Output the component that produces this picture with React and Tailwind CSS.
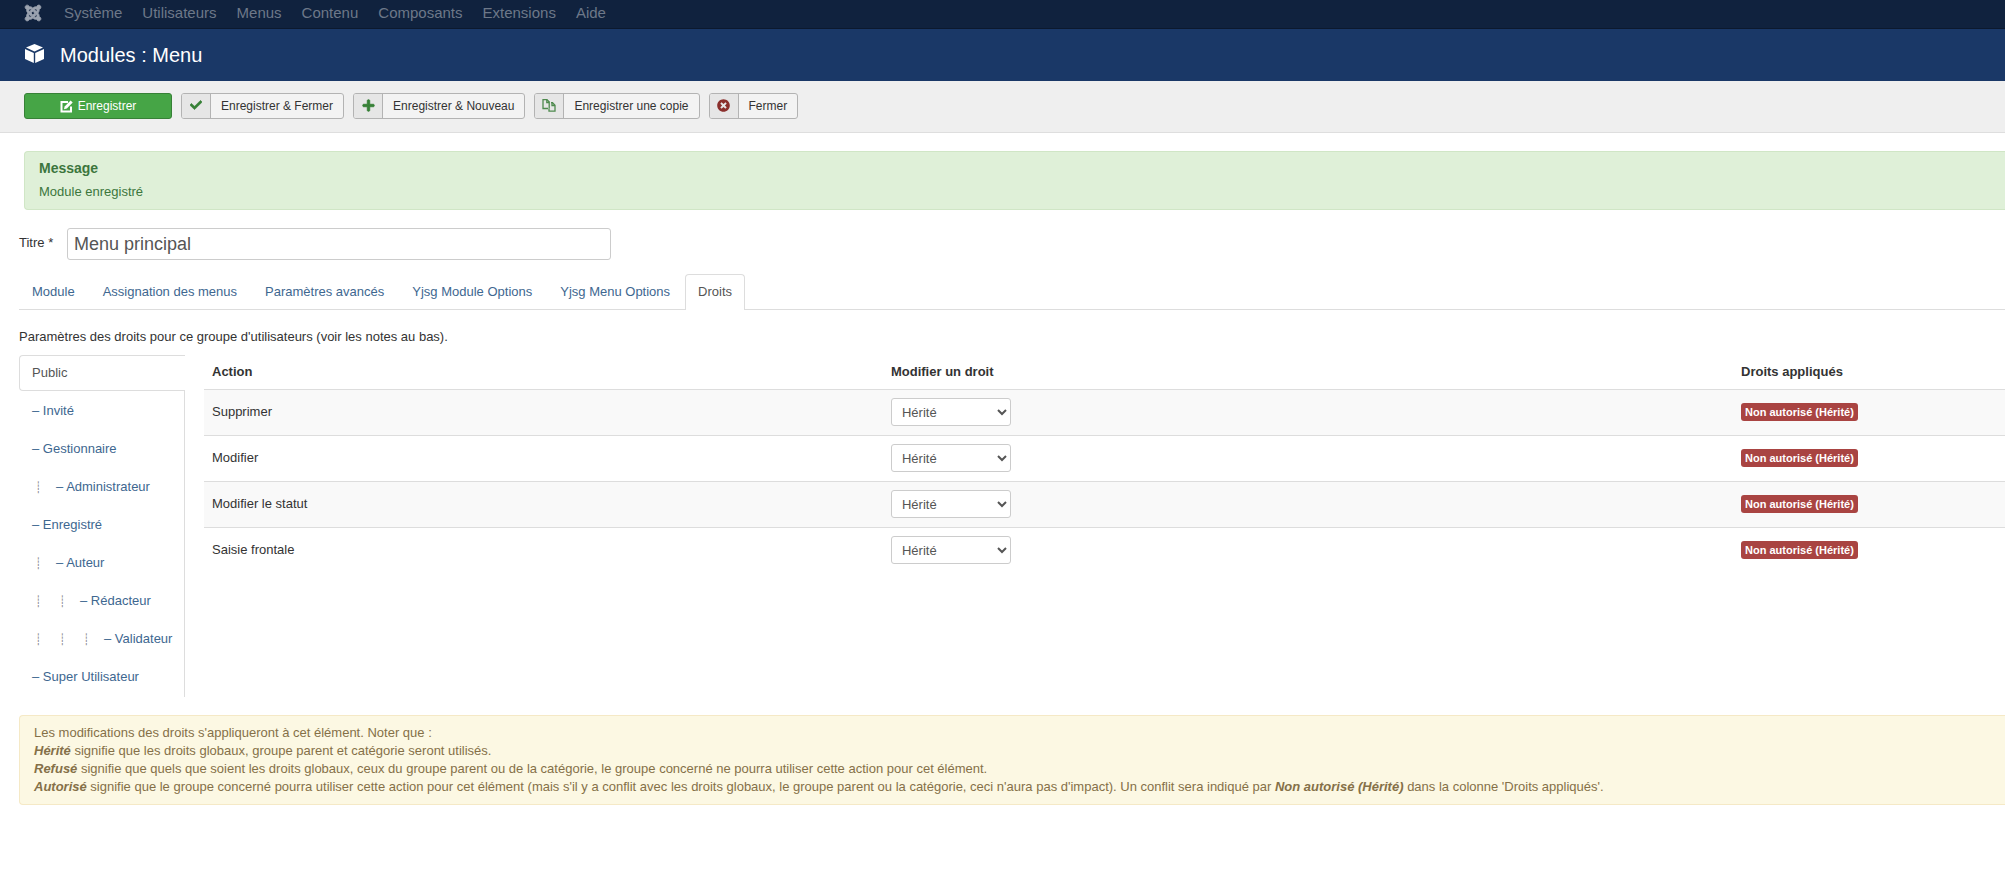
import { useState } from 'react';
import { FaCheck, FaJoomla, FaPlus, FaTimesCircle } from 'react-icons/fa';

const menus = ['Système', 'Utilisateurs', 'Menus', 'Contenu', 'Composants', 'Extensions', 'Aide'];

const tabs = [
  'Module', 'Assignation des menus', 'Paramètres avancés',
  'Yjsg Module Options', 'Yjsg Menu Options', 'Droits',
];

const groups = [
  { name: 'Public', level: 0 },
  { name: 'Invité', level: 1 },
  { name: 'Gestionnaire', level: 1 },
  { name: 'Administrateur', level: 2 },
  { name: 'Enregistré', level: 1 },
  { name: 'Auteur', level: 2 },
  { name: 'Rédacteur', level: 3 },
  { name: 'Validateur', level: 4 },
  { name: 'Super Utilisateur', level: 1 },
];

const actions = ['Supprimer', 'Modifier', 'Modifier le statut', 'Saisie frontale'];

const CubeIcon = () => (
  <svg viewBox="0 0 19 19" className="w-[19px] h-[19px] fill-white" aria-hidden="true">
    <path d="M9.5 0 18 3.6 9.5 7.4 1 3.6Z" />
    <path d="M0 5 8.800 9V19L0 15Z" />
    <path d="M19 5 10.200 9V19L19 15Z" />
  </svg>
);

const EditIcon = () => (
  <svg viewBox="0 0 13 13" className="w-[13px] h-[13px]" fill="none" stroke="white" aria-hidden="true">
    <path d="M8 2H1.500v9.500H11V6.500" strokeWidth="2" />
    <path d="M4 9.300 4.600 6.400 10.600.4l2.100 2.100L6.800 8.600Z" fill="white" stroke="none" />
  </svg>
);

const CopyIcon = () => (
  <svg viewBox="0 0 14 13" className="w-[14px] h-[13px]" fill="none" stroke="#4e8a4e" strokeWidth="1.3" aria-hidden="true">
    <path d="M6 9.500H1V.7H5L7.500 3.200" />
    <path d="M4.800.7v2.800h2.400v6" />
    <path d="M9 3.700H10.500L13 6.200v6H7V9.500" />
    <path d="M10 3.700v2.800h3" />
  </svg>
);

const ToolbarButton = ({ icon, label }) => (
  <button
    type="button"
    className="flex h-[26px] bg-[#f3f3f3] border border-[#b3b3b3] rounded-[3px] text-xs text-[#333] leading-6 overflow-hidden"
  >
    <span className="flex items-center justify-center w-[29px] h-full pb-0.5 bg-[#e6e6e6] border-r border-[#b3b3b3]">{icon}</span>
    <span className="px-2.5">{label}</span>
  </button>
);

const App = () => {
  const [title, setTitle] = useState('Menu principal');
  const [tab, setTab] = useState('Droits');
  const [group, setGroup] = useState('Public');

  return (
    <div className="min-h-screen overflow-hidden bg-white font-['Liberation_Sans',Arial,sans-serif] text-[13px] leading-[18px] text-[#333]">
      <nav className="flex items-center h-[29px] pl-6 pb-0.5 bg-[#10223e] border-b border-[#0c192e] text-[15px] text-[#6d7889]">
        <a href="#" aria-label="Joomla" className="mr-[22px] text-[#9ba3b0]">
          <FaJoomla size={18} stroke="currentColor" strokeWidth={24} />
        </a>
        <div className="flex gap-5">
          {menus.map((m) => <a key={m} href="#">{m}</a>)}
        </div>
      </nav>

      <header className="flex items-center h-[52px] pl-[25px] gap-4 bg-[#1a3867] text-white">
        <div className="pb-1"><CubeIcon /></div>
        <h1 className="text-xl">Modules : Menu</h1>
      </header>

      <div className="flex gap-[9px] h-[52px] pt-3 pl-6 bg-[#efefef] border-b border-[#dedede]">
        <button
          type="button"
          className="flex items-center justify-center gap-[5px] w-[148px] h-[26px] bg-[#46a546] border border-[#378137] rounded-[3px] text-xs text-white"
        >
          <EditIcon />Enregistrer
        </button>
        <ToolbarButton icon={<FaCheck size={12} color="#378137" stroke="#378137" strokeWidth={20} />} label="Enregistrer & Fermer" />
        <ToolbarButton icon={<FaPlus size={13} color="#378137" stroke="#378137" strokeWidth={36} />} label="Enregistrer & Nouveau" />
        <ToolbarButton icon={<CopyIcon />} label="Enregistrer une copie" />
        <ToolbarButton icon={<FaTimesCircle size={13} color="#8a2f2c" />} label="Fermer" />
      </div>

      <div className="mt-[18px] ml-6 h-[59px] pt-[7px] pl-3.5 bg-[#dff0d8] border border-r-0 border-[#d0e6c6] rounded-l text-[#3c763d]">
        <h4 className="text-sm leading-[18px] font-bold">Message</h4>
        <p className="mt-1.5">Module enregistré</p>
      </div>

      <main className="pl-[19px]">
        <div className="flex mt-[18px]">
          <label htmlFor="title" className="w-12 pt-1.5">Titre *</label>
          <input
            id="title"
            type="text"
            value={title}
            onChange={(e) => setTitle(e.target.value)}
            className="w-[544px] h-8 px-1.5 border border-[#ccc] rounded-[3px] text-lg text-[#555]"
          />
        </div>

        <div className="flex gap-0.5 mt-3.5 border-b border-[#ddd]">
          {tabs.map((t) => (
            <button
              key={t}
              type="button"
              onClick={() => setTab(t)}
              className={t === tab
                ? 'h-9 -mb-px px-3 pb-px bg-white border border-b-0 border-[#ddd] rounded-t text-[#555]'
                : 'h-[35px] px-[13px] text-[#3e6790]'}
            >
              {t}
            </button>
          ))}
        </div>

        <p className="mt-[18px]">Paramètres des droits pour ce groupe d'utilisateurs (voir les notes au bas).</p>

        <div className="flex items-start mt-[9px]">
          <ul className="shrink-0 w-[166px]">
            {groups.map((g) => (
              <li key={g.name} className={g.name === group ? '' : 'pt-0.5 last:pb-0.5 border-r border-[#ddd]'}>
                <button
                  type="button"
                  onClick={() => setGroup(g.name)}
                  className={g.name === group
                    ? 'flex items-center w-full h-9 pl-3 bg-white border border-r-0 border-[#ddd] rounded-l text-[#555]'
                    : 'flex items-center w-full h-9 pl-[13px] text-[#3e6790]'}
                >
                  {Array.from({ length: Math.max(g.level - 1, 0) }, (_, i) => (
                    <span key={i} className="w-6 pl-[3px] text-left text-[11px] text-[#888]">┊</span>
                  ))}
                  {g.level > 0 && '– '}{g.name}
                </button>
              </li>
            ))}
          </ul>

          <table className="flex-1 ml-[19px] table-fixed w-full">
            <thead>
              <tr className="h-[34px] text-left">
                <th className="w-[37.7%] pl-2">Action</th>
                <th className="w-[47.2%] pl-2">Modifier un droit</th>
                <th className="pl-2">Droits appliqués</th>
              </tr>
            </thead>
            <tbody>
              {actions.map((a) => (
                <tr key={a} className="h-[46px] border-t border-[#ddd] odd:bg-[#f9f9f9]">
                  <td className="pl-2"><label htmlFor={a}>{a}</label></td>
                  <td className="pl-2">
                    <select id={a} className="block w-[120px] h-7 px-1.5 bg-white border border-[#ccc] rounded-[3px] text-[#555]">
                      <option>Hérité</option>
                      <option>Autorisé</option>
                      <option>Refusé</option>
                    </select>
                  </td>
                  <td className="pl-2">
                    <span className="block w-fit px-1 bg-[#a94442] rounded-[3px] text-[11px] leading-[18px] font-bold text-white">
                      Non autorisé (Hérité)
                    </span>
                  </td>
                </tr>
              ))}
            </tbody>
          </table>
        </div>

        <div className="mt-[18px] py-2 pl-3.5 bg-[#fcf8e3] border border-r-0 border-[#f5e9c6] rounded-l text-[#857048]">
          <p>Les modifications des droits s'appliqueront à cet élément. Noter que :</p>
          <p><strong><em>Hérité</em></strong> signifie que les droits globaux, groupe parent et catégorie seront utilisés.</p>
          <p><strong><em>Refusé</em></strong> signifie que quels que soient les droits globaux, ceux du groupe parent ou de la catégorie, le groupe concerné ne pourra utiliser cette action pour cet élément.</p>
          <p><strong><em>Autorisé</em></strong> signifie que le groupe concerné pourra utiliser cette action pour cet élément (mais s'il y a conflit avec les droits globaux, le groupe parent ou la catégorie, ceci n'aura pas d'impact). Un conflit sera indiqué par <strong><em>Non autorisé (Hérité)</em></strong> dans la colonne 'Droits appliqués'.</p>
        </div>
      </main>
    </div>
  );
};

export default App;
